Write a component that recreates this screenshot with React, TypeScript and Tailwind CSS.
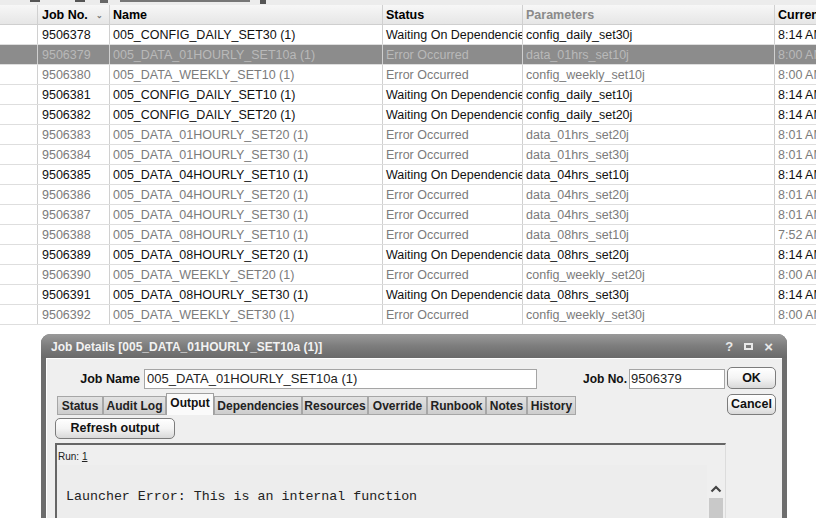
import React from 'react';

type Row = {
  no: string;
  name: string;
  error: boolean;
  params: string;
  time: string;
};

const rows: Row[] = [
  { no: '9506378', name: '005_CONFIG_DAILY_SET30 (1)', error: false, params: 'config_daily_set30j', time: '8:14 AM' },
  { no: '9506379', name: '005_DATA_01HOURLY_SET10a (1)', error: true, params: 'data_01hrs_set10j', time: '8:00 AM' },
  { no: '9506380', name: '005_DATA_WEEKLY_SET10 (1)', error: true, params: 'config_weekly_set10j', time: '8:00 AM' },
  { no: '9506381', name: '005_CONFIG_DAILY_SET10 (1)', error: false, params: 'config_daily_set10j', time: '8:14 AM' },
  { no: '9506382', name: '005_CONFIG_DAILY_SET20 (1)', error: false, params: 'config_daily_set20j', time: '8:14 AM' },
  { no: '9506383', name: '005_DATA_01HOURLY_SET20 (1)', error: true, params: 'data_01hrs_set20j', time: '8:01 AM' },
  { no: '9506384', name: '005_DATA_01HOURLY_SET30 (1)', error: true, params: 'data_01hrs_set30j', time: '8:01 AM' },
  { no: '9506385', name: '005_DATA_04HOURLY_SET10 (1)', error: false, params: 'data_04hrs_set10j', time: '8:14 AM' },
  { no: '9506386', name: '005_DATA_04HOURLY_SET20 (1)', error: true, params: 'data_04hrs_set20j', time: '8:01 AM' },
  { no: '9506387', name: '005_DATA_04HOURLY_SET30 (1)', error: true, params: 'data_04hrs_set30j', time: '8:01 AM' },
  { no: '9506388', name: '005_DATA_08HOURLY_SET10 (1)', error: true, params: 'data_08hrs_set10j', time: '7:52 AM' },
  { no: '9506389', name: '005_DATA_08HOURLY_SET20 (1)', error: false, params: 'data_08hrs_set20j', time: '8:14 AM' },
  { no: '9506390', name: '005_DATA_WEEKLY_SET20 (1)', error: true, params: 'config_weekly_set20j', time: '8:00 AM' },
  { no: '9506391', name: '005_DATA_08HOURLY_SET30 (1)', error: false, params: 'data_08hrs_set30j', time: '8:14 AM' },
  { no: '9506392', name: '005_DATA_WEEKLY_SET30 (1)', error: true, params: 'config_weekly_set30j', time: '8:00 AM' },
];

const cols = 'grid grid-cols-[38px_72px_273px_140px_252px_1fr]';
const cell = 'overflow-hidden whitespace-nowrap border-r border-[#d0d0d0] pl-[3px] pt-[1px] leading-[19px]';

const tabs = [
  { label: 'Status', w: 'w-[46px]' },
  { label: 'Audit Log', w: 'w-[63px]' },
  { label: 'Output', w: 'w-[48px]', active: true },
  { label: 'Dependencies', w: 'w-[88px]' },
  { label: 'Resources', w: 'w-[66px]' },
  { label: 'Override', w: 'w-[59px]' },
  { label: 'Runbook', w: 'w-[59px]' },
  { label: 'Notes', w: 'w-[41px]' },
  { label: 'History', w: 'w-[49px]' },
];

const JobGrid = () => (
  <div className="text-[12.5px]">
    <div className="h-[5px] flex bg-[#ececec]">
      <div className="ml-[30px] w-[10px] h-[2px] bg-[#555]" />
      <div className="ml-[35px] w-[10px] h-[2px] bg-[#555]" />
      <div className="ml-[15px] w-[8px] h-[3px] bg-[#666]" />
      <div className="ml-[12px] w-[130px] h-[2px] bg-[#777]" />
      <div className="ml-[10px] w-[6px] h-[4px] bg-[#555]" />
    </div>
    <div className={`${cols} h-[20px] bg-gradient-to-b from-[#f7f7f7] to-[#e6e6e6] border-b border-[#cfcfcf] font-bold`}>
      <div className="border-r border-[#d0d0d0]" />
      <div className={`${cell} pl-[4px] flex`}>
        <span>Job No.</span>
        <span className="ml-[8px] text-[8px] text-[#777]">⌄</span>
      </div>
      <div className={cell}>Name</div>
      <div className={cell}>Status</div>
      <div className={`${cell} text-[#8a8a8a]`}>Parameters</div>
      <div className={`${cell} border-r-0`}>Current</div>
    </div>
    {rows.map((r, i) => {
      const selected = i === 1;
      const color = selected ? 'bg-[#8c8c8c] text-[#b9b9b9]' : r.error ? 'bg-white text-[#7b7b7b]' : 'bg-white text-[#111]';
      return (
        <div key={r.no} className={`${cols} h-[20px] border-b border-[#dedede] ${color}`}>
          <div className="border-r border-[#d0d0d0]" />
          <div className={`${cell} pl-[4px]`}>{r.no}</div>
          <div className={cell}>{r.name}</div>
          <div className={cell}>{r.error ? 'Error Occurred' : 'Waiting On Dependencies'}</div>
          <div className={cell}>{r.params}</div>
          <div className={`${cell} border-r-0`}>{r.time}</div>
        </div>
      );
    })}
  </div>
);

const Btn = ({ children, className = '' }: { children: React.ReactNode; className?: string }) => (
  <button
    className={`rounded-[5px] border border-[#7c7c7c] bg-gradient-to-b from-white via-[#f4f4f4] to-[#d9d9d9] font-bold text-[12.5px] text-[#111] leading-none whitespace-nowrap ${className}`}
  >
    {children}
  </button>
);

const JobDialog = () => (
  <div className="ml-[41px] mt-[9px] w-[746px] h-[184px] rounded-t-[9px] bg-[#6d6d6d] px-[5px] flex flex-col text-[12.5px]">
    <div className="h-[24px] shrink-0 flex items-center justify-between pl-[10px] pr-[14px] pt-[1px] -mx-[5px] rounded-t-[9px] bg-gradient-to-b from-[#9a9a9a] via-[#7d7d7d] to-[#6a6a6a]">
      <span className="font-bold text-[12px] text-[#f2f2f2]">Job Details [005_DATA_01HOURLY_SET10a (1)]</span>
      <div className="flex items-center gap-[11px] text-[#e8e8e8] font-bold">
        <span className="text-[13px]">?</span>
        <span className="w-[9px] h-[7px] border-2 border-[#e8e8e8]" />
        <span className="text-[15px] leading-none">×</span>
      </div>
    </div>
    <div className="flex-1 bg-[#efefef] border-t border-l border-white pl-[8px] pr-[5px] pt-[10px]">
      <div className="flex items-start">
        <div className="flex-1">
          <div className="flex items-center h-[20px] whitespace-nowrap">
            <span className="w-[89px] shrink-0 text-right font-bold pr-[4px] text-[#111]">Job Name</span>
            <div className="w-[393px] shrink-0 h-[20px] bg-white border border-[#a5a5a5] pl-[2px] text-[13px] leading-[18px] text-[#222]">
              005_DATA_01HOURLY_SET10a (1)
            </div>
            <span className="ml-[46px] shrink-0 font-bold text-[12px] text-[#111]">Job No.</span>
            <div className="ml-[2px] w-[96px] shrink-0 h-[20px] bg-white border border-[#a5a5a5] pl-[1px] text-[13px] leading-[18px] text-[#222]">
              9506379
            </div>
          </div>
          <div className="flex items-end h-[22px] mt-[4px] ml-[2px] text-[12px] whitespace-nowrap">
            {tabs.map((t) =>
              t.active ? (
                <div key={t.label} className={`${t.w} shrink-0 h-[22px] bg-[#fafafa] border border-b-0 border-[#a0a0a0] font-bold text-center leading-[19px] text-[#111]`}>
                  {t.label}
                </div>
              ) : (
                <div key={t.label} className={`${t.w} shrink-0 h-[19px] bg-gradient-to-b from-[#e2e2e2] to-[#cdcdcd] border border-[#a6a6a6] font-bold text-center leading-[18px] text-[#222]`}>
                  {t.label}
                </div>
              ),
            )}
          </div>
          <Btn className="w-[120px] h-[21px] mt-[3px]">Refresh output</Btn>
        </div>
        <div className="flex flex-col gap-[5px] -mt-[2px] mr-[1px] shrink-0">
          <Btn className="w-[49px] h-[22px]">OK</Btn>
          <Btn className="w-[49px] h-[21px]">Cancel</Btn>
        </div>
      </div>
      <div className="mt-[4px] w-[671px] h-[80px] border-t-2 border-l-2 border-[#666] border-r border-r-[#dcdcdc] bg-[#efefef] flex">
        <div className="flex-1 flex flex-col">
          <div className="pl-[1px] pt-[4px] h-[20px] text-[10px] text-[#222]">
            Run: <span className="underline">1</span>
          </div>
          <div className="flex-1 bg-[#ededed] pt-[22px] pl-[9px] font-['Liberation_Mono',monospace] text-[13.3px] text-[#222] whitespace-nowrap">
            Launcher Error: This is an internal function
          </div>
        </div>
        <div className="w-[18px] flex flex-col items-center pt-[40px]">
          <svg width="12" height="8" viewBox="0 0 12 8">
            <path d="M1.5 6.5 L6 2 L10.5 6.5" fill="none" stroke="#444" strokeWidth="2.2" />
          </svg>
          <div className="mt-[5px] w-[14px] flex-1 bg-[#c9c9c9]" />
        </div>
      </div>
    </div>
  </div>
);

export default function App() {
  return (
    <div className="w-[816px] h-[518px] overflow-hidden bg-white font-['Liberation_Sans',Arial,sans-serif]">
      <JobGrid />
      <JobDialog />
    </div>
  );
}
